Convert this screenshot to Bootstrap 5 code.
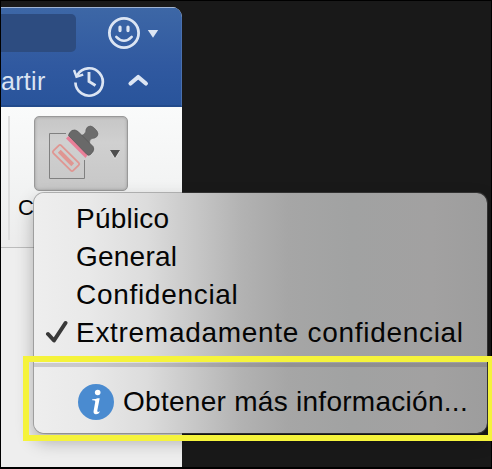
<!DOCTYPE html>
<html lang="es">
<head>
<meta charset="utf-8">
<meta name="viewport" content="width=device-width, initial-scale=1">
<title>Confidencialidad</title>
<link href="https://cdn.jsdelivr.net/npm/bootstrap@5.3.0/dist/css/bootstrap.min.css" rel="stylesheet">
<style>
body{font-family:"Liberation Sans",Arial,sans-serif;background:#000;color:#050505}
.desktop{width:492px;height:469px;padding:1px 1px 2px;background:#191919 content-box}
.app-window{width:181px;margin-top:6px;border-radius:0 10px 0 0;background:#eee}
.title-area{height:100px;background:linear-gradient(#3d67a6,#3059a0 60%,#29549b);border-top:1px solid #9fb4d4;border-right:1px solid #4a70ae;border-bottom:2px solid #234b8c;color:#dbe4f3}
.search-field{width:75px;height:38px;background:#2d4c80;border-radius:0 5px 5px 0}
.top-line{padding-top:6px}
.smile{margin-left:29px}
.tool-line{padding-top:9px;height:49px}
.share-text{font-size:25px;line-height:30px;letter-spacing:.3px;width:45px}
.history{margin-left:24px}
.ribbon{height:141px;background:linear-gradient(#fafbfb,#f3f4f4 50%,#ececec);border-bottom:1px solid #bcbcbc}
.ribbon-rule{width:2px;height:124px;margin:9px 0 0 7px;background:#dedede}
.stamp-button{width:94px;height:75px;margin:9px 0 0 24px;border:1px solid #999;border-radius:5px;background:linear-gradient(#c6c6c6,#d0d0d0 35%,#c7c7c7);box-shadow:inset 0 0 3px #999}
.stamp-label{font-size:22px;line-height:26px;margin:4px 0 0 8px}
.canvas-area{height:219px;background:#eee}
.popup-menu{left:34px;top:193px;width:453px;height:240px;border-radius:10px;z-index:2;background:linear-gradient(90deg,#eee 0,#e9e9e9 12%,#dcdcdc 25%,#c6c6c6 36%,#b2b2b2 46%,#a6a6a6 56%,#a1a2a2 70%,#a2a1a1 88%,#9d9d9d);box-shadow:0 0 0 1px rgba(90,90,90,.4),0 8px 18px rgba(0,0,0,.3)}
.menu-list{padding-top:7px}
.menu-entry{height:38px;font-size:28px;line-height:38px;white-space:nowrap;padding-left:42px}
.check-cell{width:34px;margin-left:-34px}
.ls-a{letter-spacing:.22px}.ls-b{letter-spacing:.7px}.ls-c{letter-spacing:.28px}
.menu-rule{height:4px;margin-top:11px;background:rgba(70,65,80,.2)}
.more-entry{height:66px;font-size:28px;padding:3px 0 0 44px;white-space:nowrap}
.more-label{margin-left:9px}
.highlight-frame{left:23px;top:356px;width:471px;height:85px;border:6px solid #f5f33b;z-index:3}
</style>
</head>
<body class="overflow-hidden">
<main class="desktop position-relative overflow-hidden d-flex">
  <section class="app-window overflow-hidden">
    <header class="title-area">
      <div class="top-line d-flex align-items-start">
        <div class="search-field"></div>
        <svg width="54" height="38" viewBox="105 14 54 38" class="flex-shrink-0 smile" fill="none" stroke="#dce5f3" stroke-width="2.8" stroke-linecap="round">
          <circle cx="124" cy="33" r="14.6"/><path d="M120 27v3.600M128 27v3.600" stroke-width="3.200"/><path d="M116.300 36.800q7.700 8 15.400 0" stroke-width="2.500"/><path d="M147.800 30h10.400l-5.200 7.800z" fill="#dce5f3" stroke="none"/>
        </svg>
      </div>
      <div class="d-flex align-items-center tool-line">
        <span class="share-text">artir</span>
        <svg width="84" height="40" viewBox="70 63 84 40" class="flex-shrink-0 history" fill="none" stroke="#dce5f3" stroke-width="2.7">
          <path d="M77.300 77A13.700 13.700 0 1 1 75.400 84.500"/><path d="M74 72l2.500 6.700 6.700-2" stroke-width="2.400"/><path d="M89 74v9.500l6.500 4" stroke-width="2.900"/><path d="M130.500 85.500l7.700-6.500 7.700 6.500" stroke-width="4.200" stroke-linecap="round" stroke-linejoin="round"/>
        </svg>
      </div>
    </header>
    <div class="ribbon d-flex">
      <div class="ribbon-rule"></div>
      <div class="stamp-group">
        <div class="stamp-button">
          <svg width="92" height="73" viewBox="35 117 92 73" class="d-block">
            <path d="M66 133.500H49.500v45h35V160" fill="none" stroke="#808080"/>
            <g transform="translate(66 158) rotate(45)"><rect x="-14" y="-5.500" width="28" height="11" rx="1.500" fill="none" stroke="#df9692" stroke-width="1.800"/><rect x="-9.500" y="-2" width="19" height="4" fill="#df9692"/></g>
            <path d="M68.500 136L88 154.500 85.500 158 66 138.500z" fill="#e87f98"/>
            <path d="M81.500 135.500Q86 134 86 129.500Q87 126 90.500 126Q93 126 97 131Q99 134 97 136.500Q95 138.500 92 138.500Q89 139.500 89.500 143.500z" fill="#6c6c6c" stroke="#5a5a5a" stroke-width=".6"/>
            <path d="M68.500 135.500Q69 132.500 72 130.500Q75 129 78 131.500L93 146.500Q94.500 149 93 151.500L90.500 154.500Q88.500 156 87 154.500z" fill="#696969" stroke="#555" stroke-width=".8"/>
            <path d="M110 151h10l-5 8z" fill="#eee"/><path d="M110 150h10l-5 8z" fill="#4e4e4e"/>
          </svg>
        </div>
        <div class="stamp-label">C</div>
      </div>
    </div>
    <div class="canvas-area"></div>
  </section>

  <div class="popup-menu position-absolute">
    <div class="menu-list">
      <div class="menu-entry ls-a">Público</div>
      <div class="menu-entry ls-a">General</div>
      <div class="menu-entry ls-b">Confidencial</div>
      <div class="menu-entry ls-b d-flex align-items-center"><span class="check-cell d-flex"><svg width="26" height="26" viewBox="0 0 26 26" fill="none"><path d="M6 14l6 6.500L23.500 3" stroke="#393939" stroke-width="4" stroke-linecap="round" stroke-linejoin="round"/></svg></span>Extremadamente confidencial</div>
    </div>
    <div class="menu-rule"></div>
    <div class="more-entry d-flex align-items-center ls-c">
      <svg width="36" height="36" viewBox="0 0 36 36" class="flex-shrink-0"><circle cx="18" cy="18" r="18" fill="#4a8bd0"/><circle cx="19.700" cy="8.500" r="2.800" fill="#fff"/><path d="M14.200 15.200q4-.2 5.300-1h2.200L19.300 26.500q-.4 2.300 2.600.8-.8 3-4 3-2.800-.2-2.300-3.300l1.700-9.500q0-1.500-3.100-1.300z" fill="#fff"/></svg>
      <span class="more-label">Obtener más información...</span>
    </div>
  </div>
  <div class="highlight-frame position-absolute"></div>
</main>
<script src="https://cdn.jsdelivr.net/npm/bootstrap@5.3.0/dist/js/bootstrap.bundle.min.js"></script>
</body>
</html>
